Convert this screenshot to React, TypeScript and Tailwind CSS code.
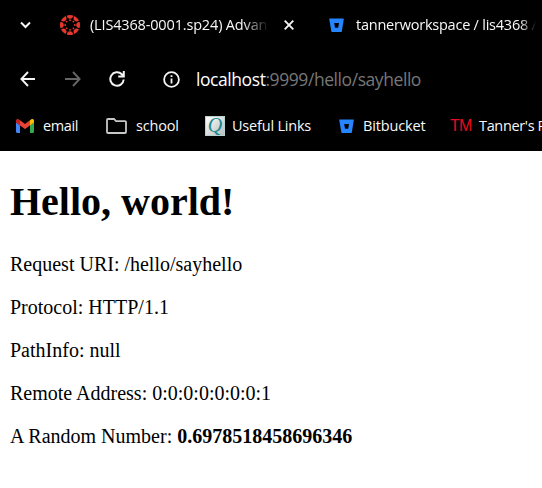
import type { ReactNode } from "react";

const uiFont = "font-['Open_Sans','Noto_Sans',sans-serif]";

function Bucket() {
  return (
    <svg width="15" height="15" viewBox="0 0 15 15" className="block shrink-0">
      <path fillRule="evenodd" fill="#2684ff" d="M.6.6h13.8c.3 0 .5.2.4.5l-2 12.4c-.1.3-.2.5-.5.5H2.9c-.3 0-.5-.2-.5-.5L.2 1.1C.1.8.3.6.6.6ZM5.2 5l.8 4.7h3.2L10 5H5.2Z" />
    </svg>
  );
}

function Canvas() {
  const spokes = [0, 45, 90, 135, 180, 225, 270, 315];
  return (
    <svg width="20" height="20" viewBox="-10 -10 20 20" className="block shrink-0">
      {spokes.map((angle) => (
        <g key={angle} transform={`rotate(${angle})`} fill="#e8382d">
          <path d="M-3.2-9.5Q0-10.5 3.2-9.5Q2.7-6.3 0-6.2Q-2.7-6.3-3.2-9.5Z" />
          <circle cx="0" cy="-4.8" r=".9" />
        </g>
      ))}
    </svg>
  );
}

function Gmail() {
  return (
    <svg width="18" height="14" viewBox="0 0 18 14" className="block shrink-0">
      <path fill="#4285f4" d="M0 3.3 4 6.3V14H1.2C.5 14 0 13.5 0 12.8Z" />
      <path fill="#34a853" d="M18 3.3 14 6.3V14h2.8c.7 0 1.2-.5 1.2-1.2Z" />
      <path fill="#fbbc04" d="M14 1.2V6.4l4-3V1.8C18 .2 16.2-.5 15.1.4Z" />
      <path fill="#ea4335" d="M4 6.4V1.2l5 3.7 5-3.7v5.2l-5 3.7Z" />
      <path fill="#c5221f" d="M0 1.8v1.6l4 3V1.2L2.9.4C1.8-.5 0 .2 0 1.8Z" />
    </svg>
  );
}

function Quill() {
  return (
    <span className="flex h-5 w-5 shrink-0 items-center justify-center overflow-hidden border border-[#b5d2d1] bg-linear-to-br from-white to-[#b9bdbd] pb-0.5 font-['Liberation_Serif',serif] text-[20px] leading-5 text-[#168a8b] italic">
      Q
    </span>
  );
}

function Label({ className, children }: { className: string; children: ReactNode }) {
  return <span className={`block shrink-0 whitespace-nowrap ${className}`}>{children}</span>;
}

export default function App() {
  return (
    <div className="flex h-[488px] w-[542px] flex-col overflow-hidden bg-white">
      <header className={`h-[151px] shrink-0 overflow-hidden bg-black text-[14.5px] leading-5 text-[#f8f8f8] ${uiFont}`}>
        <div className="flex h-[50px] items-center pl-5">
          <svg width="11" height="8" viewBox="0 0 11 8" className="block shrink-0" fill="none" stroke="#f4f4f4" strokeWidth="2">
            <path d="m1 1.5 4.5 4.5L10 1.5" />
          </svg>
          <div className="ml-[29px] flex items-center">
            <Canvas />
            <Label className="ml-[10px] w-[179px] overflow-hidden mask-r-from-85% mask-r-to-100% tracking-[-0.16px]">(LIS4368-0001.sp24) Advan</Label>
          </div>
          <svg width="10" height="10" viewBox="0 0 10 10" className="ml-[15px] block shrink-0" fill="none" stroke="#f4f4f4" strokeWidth="1.9">
            <path d="m.7.7 8.6 8.6M9.3.7.7 9.3" />
          </svg>
          <div className="ml-[35px] flex items-center">
            <Bucket />
            <Label className="ml-[12px] w-[180px] overflow-hidden mask-r-from-91% mask-r-to-100% tracking-[-0.23px]">tannerworkspace / lis4368 /</Label>
          </div>
        </div>
        <div className="flex h-[58px] items-center pl-5">
          <svg width="16" height="16" viewBox="0 0 16 16" className="block shrink-0" fill="none" stroke="#f4f4f4" strokeWidth="1.9">
            <path d="M15 8H2M8 1 1.4 8 8 15" />
          </svg>
          <svg width="16" height="16" viewBox="0 0 16 16" className="ml-[29px] block shrink-0" fill="none" stroke="#666" strokeWidth="1.9">
            <path d="M0 8h14M8 1l6.6 7L8 15" />
          </svg>
          <svg width="16" height="16" viewBox="0 0 16 16" className="ml-[28px] block shrink-0" fill="none" stroke="#f4f4f4" strokeWidth="2">
            <path d="M14.7 8.5A6.7 6.7 0 1 1 12.8 3.3L14.4 5M14.8 0v5.6H9.2" />
          </svg>
          <svg width="17" height="17" viewBox="0 0 17 17" className="ml-[38px] block shrink-0" fill="none" stroke="#f4f4f4" strokeWidth="1.8">
            <circle cx="8.5" cy="8.5" r="7.4" />
            <path d="M8.5 7.5v5M8.5 4.3v1.8" />
          </svg>
          <Label className="ml-[16px] text-[17.5px] leading-6 tracking-[-0.43px] text-white">
            localhost<span className="text-[#777]">:9999/hello/sayhello</span>
          </Label>
        </div>
        <div className="flex h-[36px] items-center pl-4">
          <Gmail />
          <Label className="ml-[9px] w-[63px] tracking-[-0.4px]">email</Label>
          <svg width="21" height="16" viewBox="0 0 21 16" className="block shrink-0" fill="none" stroke="#c7c7c7" strokeWidth="1.8">
            <path d="M2 1h6l2 2.2h9a1 1 0 0 1 1 1V14a1 1 0 0 1-1 1H2a1 1 0 0 1-1-1V2a1 1 0 0 1 1-1Z" />
          </svg>
          <Label className="ml-[9px] w-[69px] tracking-[-0.2px]">school</Label>
          <Quill />
          <Label className="ml-[7px] w-[107px] tracking-[-0.2px]">Useful Links</Label>
          <Bucket />
          <Label className="ml-[9px] w-[87px] tracking-[-0.15px]">Bitbucket</Label>
          <Label className="w-[29px] font-['Liberation_Sans',sans-serif] text-[16px] tracking-[-0.8px] text-[#e60b20]">TM</Label>
          <Label className="tracking-[-0.35px]">Tanner's Page</Label>
        </div>
      </header>
      <main className="px-[10px] pt-[28px] font-['Liberation_Serif','Times_New_Roman',serif] text-[20px] leading-[23px] text-black">
        <h1 className="mb-[28px] text-[40px] leading-[46px] font-bold">Hello, world!</h1>
        <div className="flex flex-col gap-5">
          <p>Request URI: /hello/sayhello</p>
          <p>Protocol: HTTP/1.1</p>
          <p>PathInfo: null</p>
          <p>Remote Address: 0:0:0:0:0:0:0:1</p>
          <p>A Random Number: <b>0.6978518458696346</b></p>
        </div>
      </main>
    </div>
  );
}
